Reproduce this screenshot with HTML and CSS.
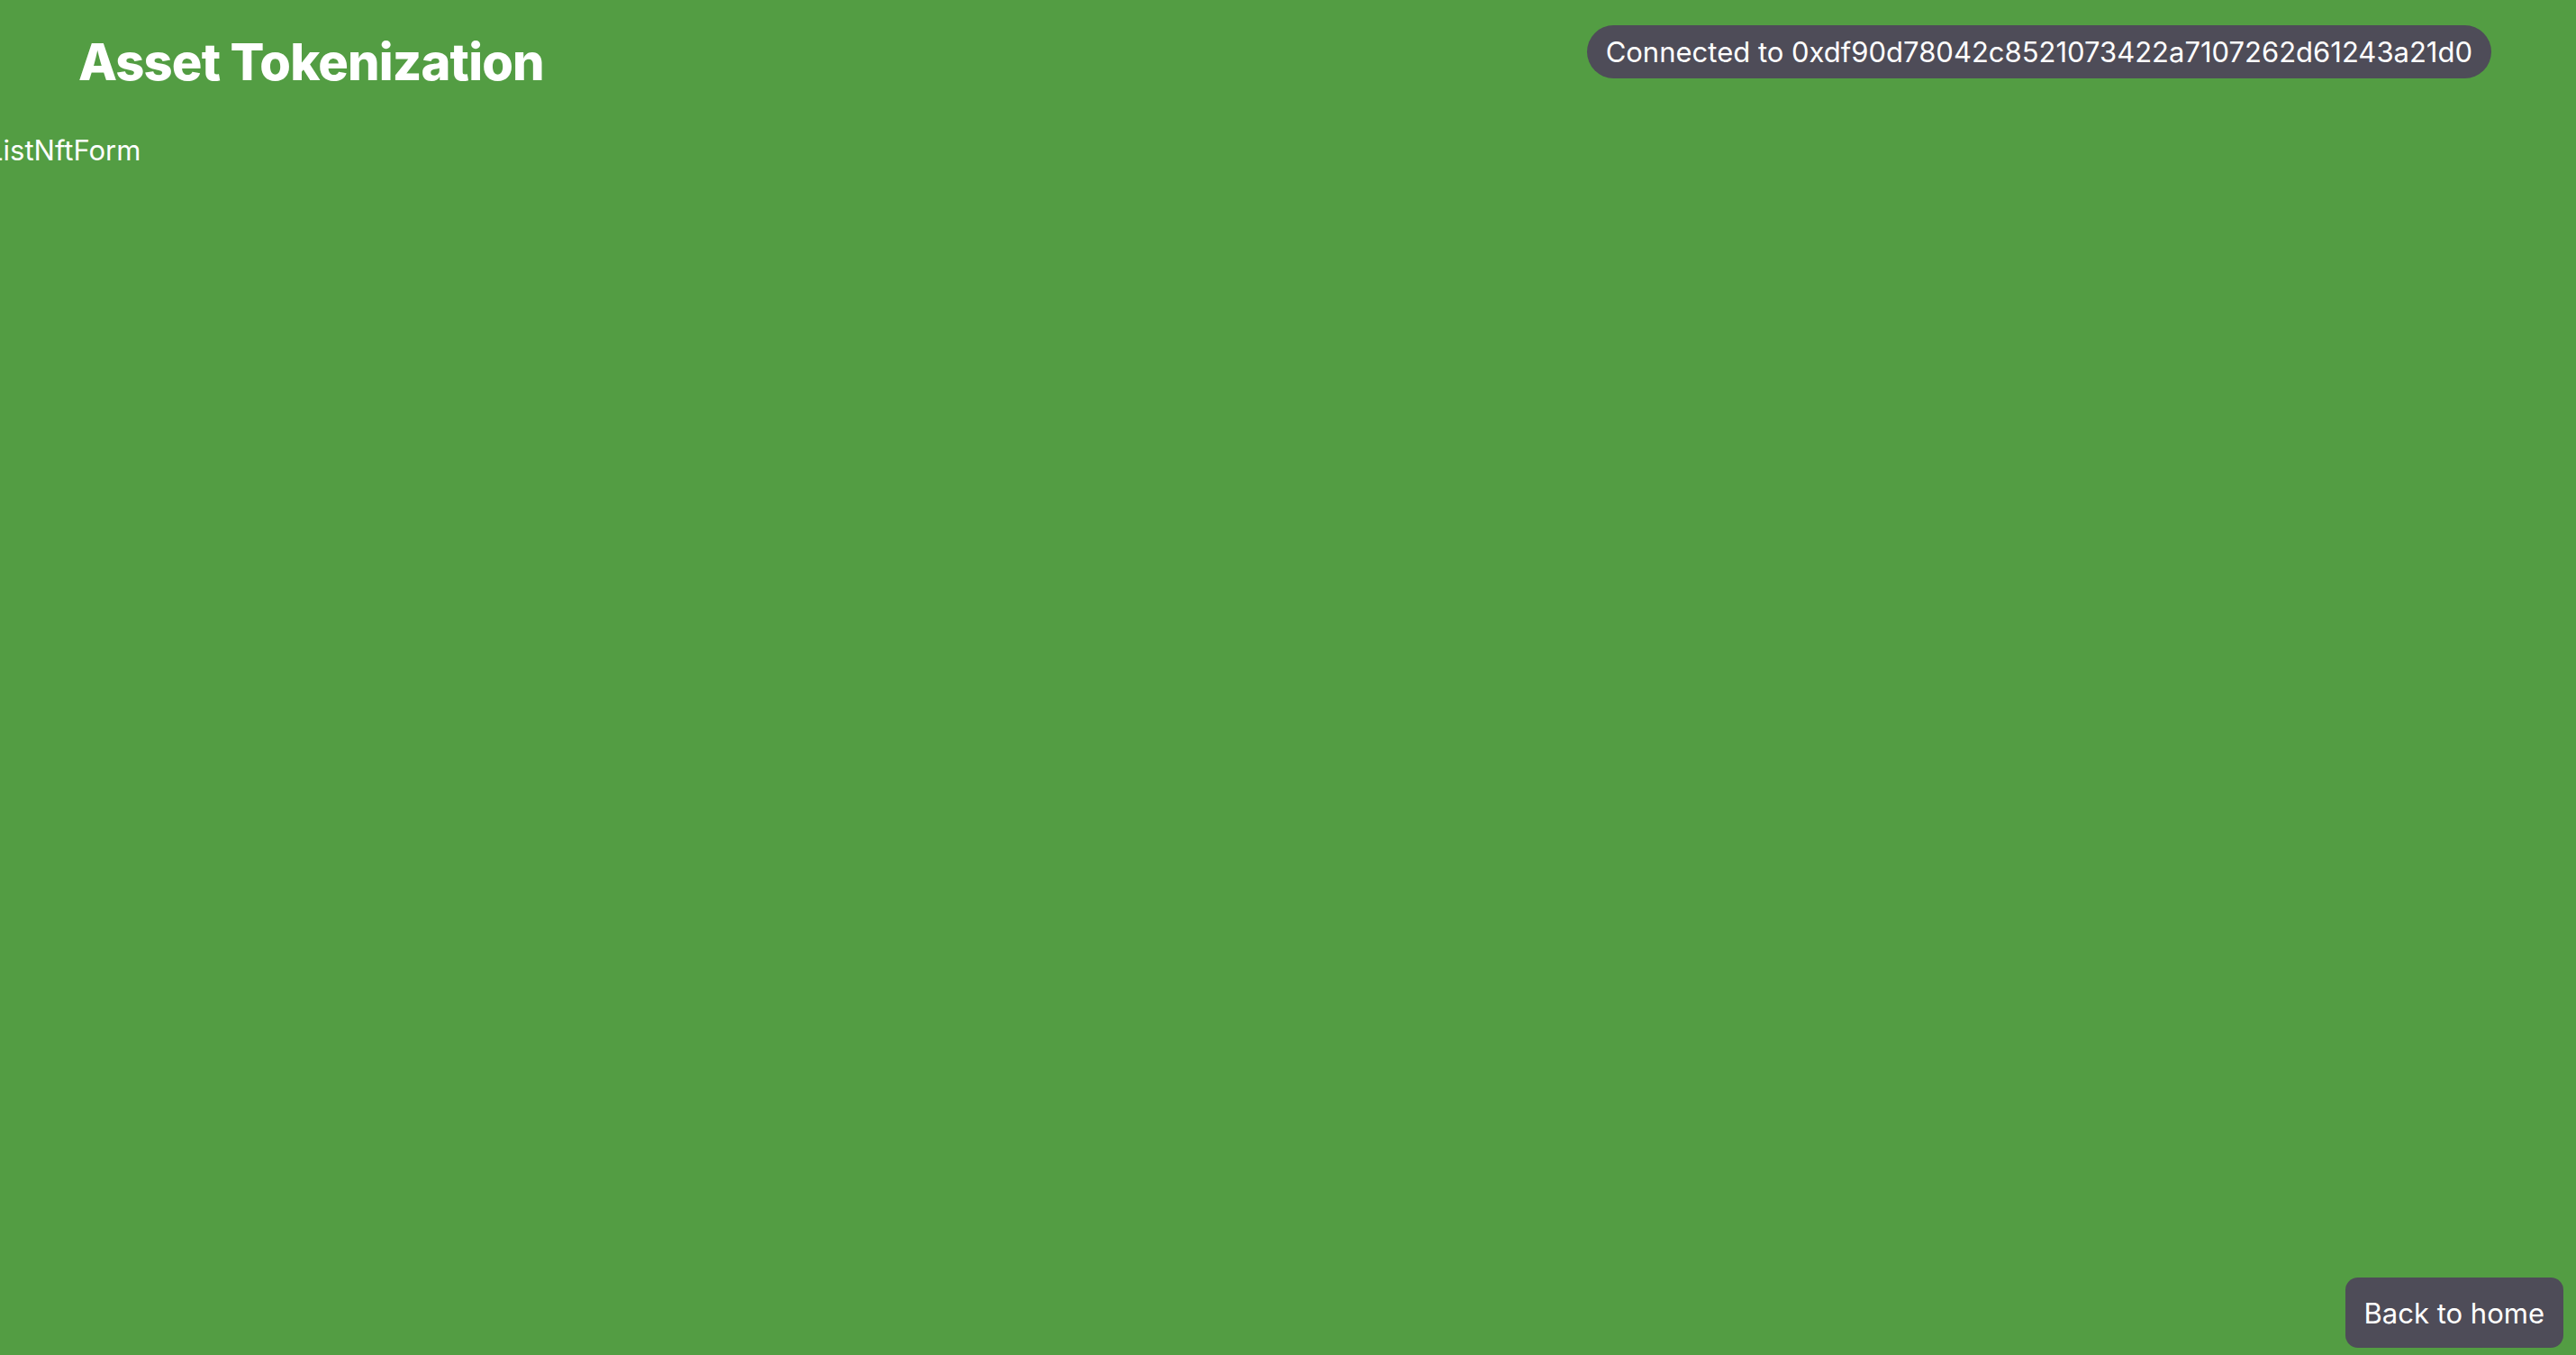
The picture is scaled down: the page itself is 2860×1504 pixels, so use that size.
FILE: index.html
```html
<!DOCTYPE html>
<html lang="en">
<head>
<meta charset="utf-8">
<title>Asset Tokenization</title>
<link rel="stylesheet" href="styles.css">
</head>
<body>
<header class="topbar">
  <h1 class="brand">Asset Tokenization</h1>
  <div class="wallet">Connected to 0xdf90d78042c8521073422a7107262d61243a21d0</div>
</header>
<main class="content">
  <div class="form-name">ListNftForm</div>
</main>
<button class="home-btn" type="button">Back to home</button>
</body>
</html>
```
FILE: styles.css
```css
html, body {
  margin: 0;
  padding: 0;
}
body {
  background: #539d43;
  color: #ffffff;
  font-family: Inter, "Noto Sans", "Liberation Sans", sans-serif;
  min-height: 1504px;
}
.topbar {
  display: flex;
  justify-content: space-between;
  align-items: flex-start;
  padding: 28px 94px 0 87px;
}
.brand {
  margin: 13px 0 0 0;
  font-size: 56px;
  line-height: 56px;
  font-weight: 800;
  letter-spacing: -0.015em;
}
.wallet {
  background: #4e4c58;
  border-radius: 9999px;
  padding: 11px 21px;
  font-size: 31px;
  line-height: 37px;
}
.content {
  margin-top: 51px;
}
.form-name {
  font-size: 31px;
  line-height: 38px;
  margin-left: -14px;
}
.home-btn {
  position: fixed;
  right: 14px;
  bottom: 8px;
  background: #4e4c58;
  color: #ffffff;
  border: none;
  border-radius: 14px;
  padding: 0 21px;
  height: 78px;
  font-family: Inter, "Noto Sans", "Liberation Sans", sans-serif;
  font-size: 31px;
  cursor: pointer;
}
```
